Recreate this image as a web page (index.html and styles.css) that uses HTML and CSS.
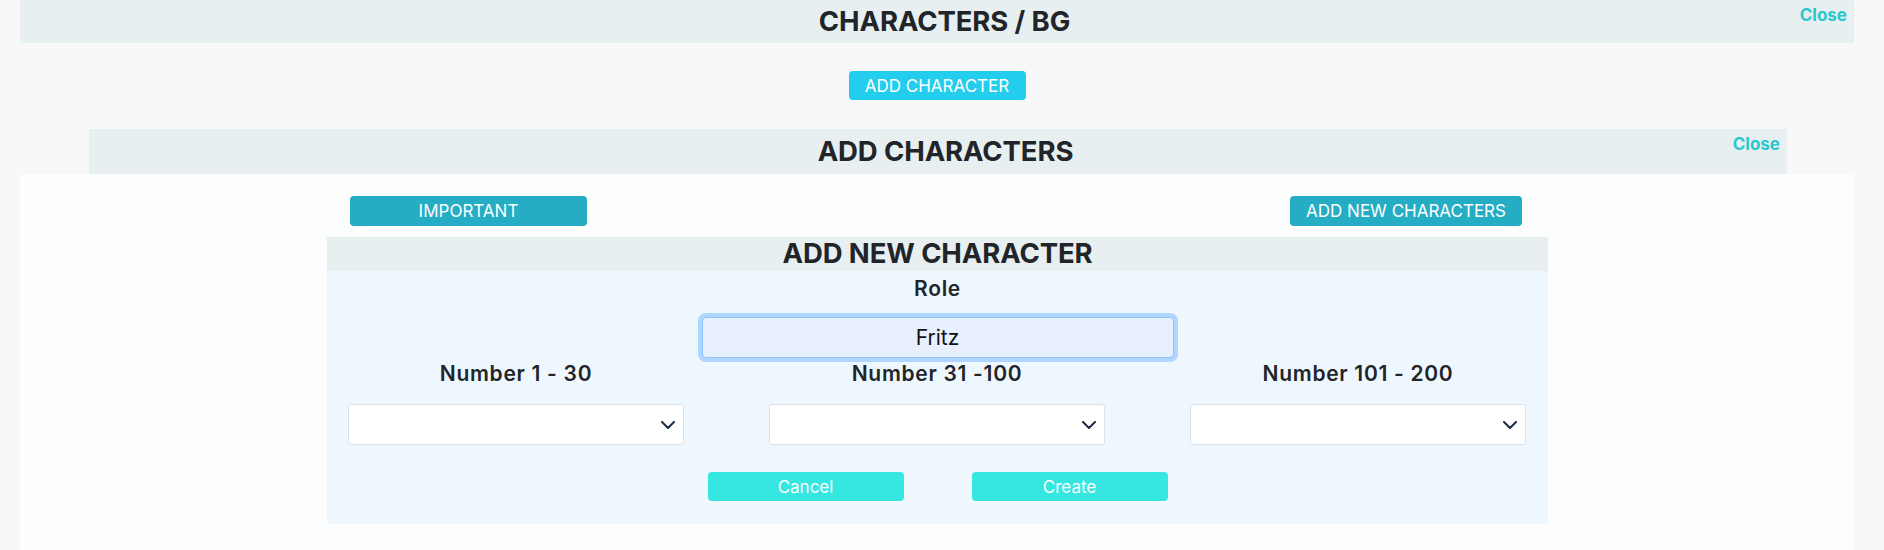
FILE: index.html
```html
<!DOCTYPE html>
<html lang="en">
<head>
<meta charset="utf-8">
<title>Characters / BG</title>
<link rel="stylesheet" href="styles.css">
</head>
<body>
<div class="page">
  <header class="top-header">
    <h1 class="title title-offset">CHARACTERS / BG</h1>
    <a class="close close-top" href="#">Close</a>
  </header>
  <div class="add-row">
    <button class="btn btn-add">ADD CHARACTER</button>
  </div>
  <header class="inner-header">
    <h2 class="title title-offset">ADD CHARACTERS</h2>
    <a class="close close-inner" href="#">Close</a>
  </header>
  <section class="panel">
    <div class="panel-actions">
      <button class="btn btn-dark btn-important">IMPORTANT</button>
      <button class="btn btn-dark btn-new">ADD NEW CHARACTERS</button>
    </div>
    <div class="box">
      <div class="box-header">
        <h3 class="title">ADD NEW CHARACTER</h3>
      </div>
      <div class="box-body">
        <label class="label">Role</label>
        <input class="role-input" type="text" value="Fritz">
        <div class="numbers">
          <div class="num-col">
            <label class="label">Number 1 - 30</label>
            <div class="select"><svg width="14" height="8" viewBox="0 0 14 8"><path d="M1 1l6 6 6-6" fill="none" stroke="#1e2a47" stroke-width="2" stroke-linecap="round" stroke-linejoin="round"/></svg></div>
          </div>
          <div class="num-col">
            <label class="label">Number 31 -100</label>
            <div class="select"><svg width="14" height="8" viewBox="0 0 14 8"><path d="M1 1l6 6 6-6" fill="none" stroke="#1e2a47" stroke-width="2" stroke-linecap="round" stroke-linejoin="round"/></svg></div>
          </div>
          <div class="num-col">
            <label class="label">Number 101 - 200</label>
            <div class="select"><svg width="14" height="8" viewBox="0 0 14 8"><path d="M1 1l6 6 6-6" fill="none" stroke="#1e2a47" stroke-width="2" stroke-linecap="round" stroke-linejoin="round"/></svg></div>
          </div>
        </div>
        <div class="form-actions">
          <button class="btn btn-light">Cancel</button>
          <button class="btn btn-light">Create</button>
        </div>
      </div>
    </div>
  </section>
</div>
</body>
</html>
```
FILE: styles.css
```css
* { box-sizing: border-box; }

html, body {
  margin: 0;
  padding: 0;
}

body {
  background: #f8f8f8;
  font-family: Inter, "Noto Sans", sans-serif;
  color: #212529;
  height: 550px;
  overflow: hidden;
}

.page {
  margin: 0 30px 0 20px;
}

.title {
  margin: 0;
  font-size: 27.5px;
  font-weight: 700;
  line-height: 1;
  color: #212529;
  letter-spacing: -0.1px;
}

.title-offset {
  padding-left: 15px;
}

.top-header {
  height: 43px;
  background: #e8eff1;
  display: flex;
  justify-content: center;
  align-items: center;
  position: relative;
}

.close {
  position: absolute;
  font-size: 17px;
  font-weight: 700;
  color: #2bc7cc;
  text-decoration: none;
  line-height: 1;
}

.close-top {
  right: 7px;
  top: 7px;
}

.close-inner {
  right: 7px;
  top: 7px;
}

.add-row {
  height: 86px;
  display: flex;
  justify-content: center;
  padding-top: 28px;
}

.btn {
  border: none;
  border-radius: 4px;
  color: #fff;
  font-family: Inter, "Noto Sans", sans-serif;
  cursor: pointer;
  display: flex;
  align-items: center;
  justify-content: center;
  padding: 0;
}

.btn-add {
  width: 177px;
  height: 29px;
  background: #22cdee;
  font-size: 17px;
  font-weight: 400;
}

.inner-header {
  height: 45px;
  margin: 0 67px 0 69px;
  background: #e8eff1;
  display: flex;
  justify-content: center;
  align-items: center;
  position: relative;
}

.panel {
  background: #fcfefe;
  height: 376px;
  padding-top: 22px;
}

.panel-actions {
  display: flex;
  justify-content: space-between;
  padding: 0 332px 0 330px;
}

.btn-dark {
  height: 30px;
  background: #25adc4;
  font-size: 17px;
  font-weight: 400;
}

.btn-important { width: 237px; }
.btn-new { width: 232px; }

.box {
  width: 1221px;
  margin: 11px auto 0 307px;
}

.box-header {
  height: 34px;
  background: #e8eff1;
  display: flex;
  justify-content: center;
  align-items: center;
}

.box-body {
  background: #eff7fe;
  padding: 4px 21px 23px;
  display: flex;
  flex-direction: column;
  align-items: center;
}

.label {
  display: block;
  font-size: 21px;
  font-weight: 600;
  line-height: 28px;
  letter-spacing: 0.7px;
  color: #212529;
  text-align: center;
}

.role-input {
  margin-top: 14px;
  width: 472px;
  height: 41px;
  background: #e8f0fe;
  border: 1px solid #8ec5fc;
  border-radius: 4px;
  box-shadow: 0 0 0 4px rgba(160, 205, 255, 0.8);
  font-family: Inter, "Noto Sans", sans-serif;
  font-size: 21px;
  color: #111;
  text-align: center;
  outline: none;
}

.numbers {
  margin-top: 2px;
  width: 100%;
  display: grid;
  grid-template-columns: repeat(3, 336px);
  column-gap: 85px;
}

.num-col {
  display: flex;
  flex-direction: column;
  align-items: stretch;
}

.select {
  margin-top: 16px;
  height: 41px;
  background: #fff;
  border: 1px solid #dbe1ea;
  border-radius: 3px;
  display: flex;
  align-items: center;
  justify-content: flex-end;
  padding-right: 8px;
}

.form-actions {
  margin-top: 27px;
  display: flex;
  gap: 68px;
}

.btn-light {
  width: 196px;
  height: 29px;
  background: #36e6e0;
  font-size: 17px;
  font-weight: 400;
}
```
